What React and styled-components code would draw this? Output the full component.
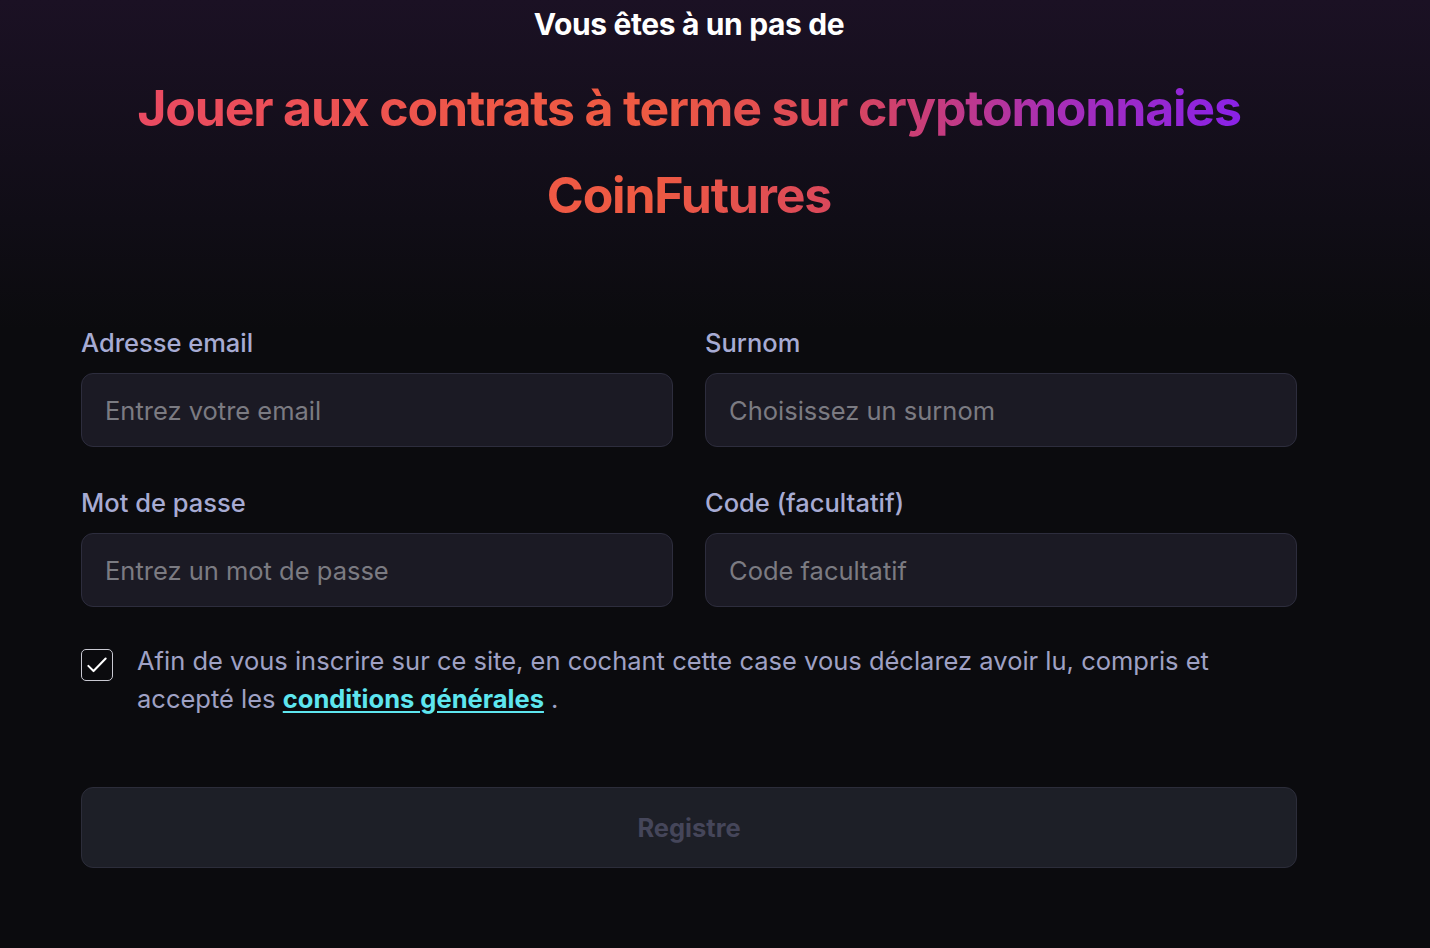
import React, { useState } from 'react'
import styled, { createGlobalStyle } from 'styled-components'

const GlobalStyle = createGlobalStyle`
  * {
    box-sizing: border-box;
  }
  body {
    margin: 0;
    background: #0b0b0e;
    font-family: Inter, 'Noto Sans', sans-serif;
  }
`

const Page = styled.div`
  min-height: 948px;
  padding: 0 133px 0 81px;
  background: linear-gradient(to bottom, #1b1124 0px, #100d16 220px, #0b0b0e 330px);
`

const Hero = styled.header`
  text-align: center;
`

const Eyebrow = styled.div`
  font-size: 30px;
  line-height: 48px;
  font-weight: 700;
  letter-spacing: -0.012em;
  color: #ffffff;
`

const GradientTitle = styled.h1`
  margin: ${({ $top }) => $top}px 0 0;
  font-size: 50px;
  line-height: 72px;
  font-weight: 700;
  letter-spacing: -0.024em;
  background: linear-gradient(
    90deg,
    #e94a62 4.7%,
    #ef5846 34.6%,
    #ee5a42 46.9%,
    #d9475c 62.4%,
    #c83d7a 69.8%,
    #a82fb5 79.7%,
    #8a22e6 95.1%
  );
  -webkit-background-clip: text;
  background-clip: text;
  color: transparent;
`

const Form = styled.form`
  margin-top: 96px;
`

const Grid = styled.div`
  display: grid;
  grid-template-columns: 1fr 1fr;
  column-gap: 32px;
  row-gap: 40px;
`

const Field = styled.label`
  display: flex;
  flex-direction: column;
  gap: 14px;
`

const LabelText = styled.span`
  font-size: 25.5px;
  line-height: 32px;
  font-weight: 500;
  color: #a7abd3;
`

const Input = styled.input`
  height: 74px;
  padding: 0 23px;
  border: 1px solid #2d2d3d;
  border-radius: 12px;
  background: #1b1a24;
  font-family: inherit;
  font-size: 25.5px;
  color: #e6e6ee;
  outline: none;
  &::placeholder {
    color: #7b7b82;
  }
`

const Consent = styled.div`
  display: flex;
  align-items: flex-start;
  gap: 24px;
  margin-top: 35px;
`

const Box = styled.button`
  flex: none;
  width: 32px;
  height: 32px;
  margin-top: 7px;
  padding: 0;
  display: flex;
  align-items: center;
  justify-content: center;
  border: 1.5px solid #c9c9d2;
  border-radius: 5px;
  background: transparent;
  cursor: pointer;
`

const ConsentText = styled.p`
  margin: 0;
  font-size: 25.5px;
  line-height: 38px;
  color: #9fa1c4;
`

const Link = styled.a`
  color: #5ee6ef;
  font-weight: 700;
  text-decoration: underline;
  text-underline-offset: 3px;
`

const Submit = styled.button`
  display: block;
  width: 100%;
  height: 81px;
  margin-top: 69px;
  border: 1px solid #2c2d3a;
  border-radius: 12px;
  background: #1d1f27;
  font-family: inherit;
  font-size: 25.5px;
  font-weight: 700;
  color: #45465a;
  cursor: not-allowed;
`

const fields = [
  { label: 'Adresse email', placeholder: 'Entrez votre email', type: 'email' },
  { label: 'Surnom', placeholder: 'Choisissez un surnom', type: 'text' },
  { label: 'Mot de passe', placeholder: 'Entrez un mot de passe', type: 'password' },
  { label: 'Code (facultatif)', placeholder: 'Code facultatif', type: 'text' },
]

export default function App() {
  const [checked, setChecked] = useState(true)
  return (
    <Page>
      <GlobalStyle />
      <Hero>
        <Eyebrow>Vous êtes à un pas de</Eyebrow>
        <GradientTitle $top={24}>Jouer aux contrats à terme sur cryptomonnaies</GradientTitle>
        <GradientTitle $top={15}>CoinFutures</GradientTitle>
      </Hero>
      <Form onSubmit={(e) => e.preventDefault()}>
        <Grid>
          {fields.map((f) => (
            <Field key={f.label}>
              <LabelText>{f.label}</LabelText>
              <Input type={f.type} placeholder={f.placeholder} />
            </Field>
          ))}
        </Grid>
        <Consent>
          <Box type="button" onClick={() => setChecked(!checked)}>
            {checked && (
              <svg width="26" height="26" viewBox="0 0 24 24" fill="none">
                <path
                  d="M4 12.8l4.8 4.8L20 6"
                  stroke="#ffffff"
                  strokeWidth="1.9"
                  strokeLinecap="round"
                  strokeLinejoin="round"
                />
              </svg>
            )}
          </Box>
          <ConsentText>
            Afin de vous inscrire sur ce site, en cochant cette case vous déclarez avoir lu, compris et
            accepté les <Link href="#">conditions générales</Link> .
          </ConsentText>
        </Consent>
        <Submit type="submit" disabled={!checked}>
          Registre
        </Submit>
      </Form>
    </Page>
  )
}
